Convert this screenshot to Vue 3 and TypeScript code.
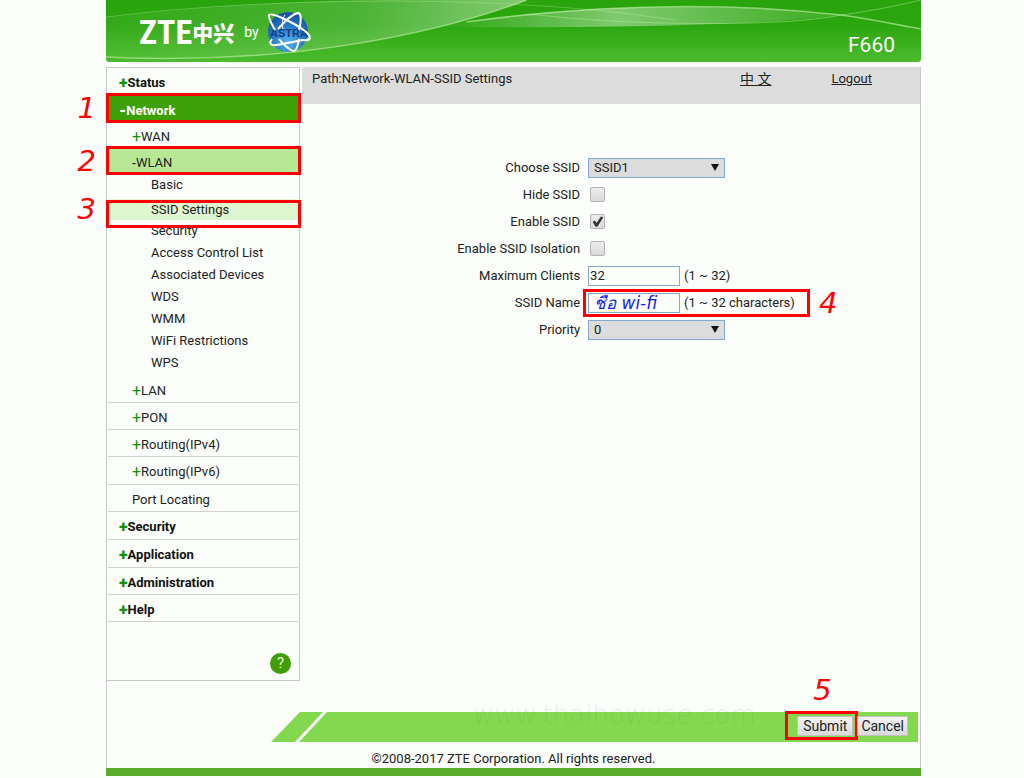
<script setup lang="ts">
import { ref } from 'vue'

interface Leaf {
  label: string
  current?: boolean
}
interface Entry {
  label: string
  sign: '+' | '-' | ''
  tall?: boolean
  step?: number
  leaves?: Leaf[]
}
interface Section extends Entry {
  entries?: Entry[]
}

const sections: Section[] = [
  { label: 'Status', sign: '+' },
  {
    label: 'Network',
    sign: '-',
    step: 1,
    entries: [
      { label: 'WAN', sign: '+' },
      {
        label: 'WLAN',
        sign: '-',
        step: 2,
        leaves: [
          { label: 'Basic' },
          { label: 'SSID Settings', current: true },
          { label: 'Security' },
          { label: 'Access Control List' },
          { label: 'Associated Devices' },
          { label: 'WDS' },
          { label: 'WMM' },
          { label: 'WiFi Restrictions' },
          { label: 'WPS' },
        ],
      },
      { label: 'LAN', sign: '+' },
      { label: 'PON', sign: '+' },
      { label: 'Routing(IPv4)', sign: '+' },
      { label: 'Routing(IPv6)', sign: '+', tall: true },
      { label: 'Port Locating', sign: '' },
    ],
  },
  { label: 'Security', sign: '+', tall: true },
  { label: 'Application', sign: '+', tall: true },
  { label: 'Administration', sign: '+' },
  { label: 'Help', sign: '+' },
]

const ssid = ref('SSID1')
const hide = ref(false)
const enable = ref(true)
const isolation = ref(false)
const clients = ref('32')
const ssidName = ref('ชื่อ wi-fi')
const priority = ref('0')
</script>

<template>
  <div class="page">
    <header class="banner">
      <svg class="waves" viewBox="0 0 814 62" preserveAspectRatio="none" aria-hidden="true">
        <defs>
          <linearGradient id="glow" x1="0" y1="0" x2="1" y2="0">
            <stop offset="0" stop-color="#fff" stop-opacity="0.04" />
            <stop offset="0.6" stop-color="#fff" stop-opacity="0.16" />
            <stop offset="1" stop-color="#fff" stop-opacity="0.42" />
          </linearGradient>
          <linearGradient id="lens" x1="0" y1="0" x2="1" y2="0">
            <stop offset="0" stop-color="#fff" stop-opacity="0" />
            <stop offset="0.45" stop-color="#fff" stop-opacity="0.4" />
            <stop offset="1" stop-color="#fff" stop-opacity="0.08" />
          </linearGradient>
        </defs>
        <path d="M0 17 C100 6 220 -4 420 0 C330 34 180 66 0 57 Z" fill="url(#glow)" />
        <path d="M0 57 C180 66 330 34 420 0" fill="none" stroke="#c3efae" stroke-opacity="0.6" stroke-width="1.5" />
        <path d="M0 17 C120 2 270 -2 380 3 S520 14 570 20" fill="none" stroke="#c3efae" stroke-opacity="0.3" />
        <path d="M330 27 C450 4 620 2 734 15 C650 26 500 28 330 27 Z" fill="url(#lens)" />
        <path d="M360 22 C500 3 620 2 734 15 C765 19 790 25 814 29" fill="none" stroke="#c9f3b4" stroke-opacity="0.6" stroke-width="1.5" />
        <path d="M420 14 C540 27 680 26 734 15 C765 11 790 6 814 0" fill="none" stroke="#c9f3b4" stroke-opacity="0.4" />
      </svg>
      <div class="brand">
        <span class="zte">ZTE</span><span class="zte-cn">中兴</span>
        <span class="by">by</span>
        <svg class="astra" viewBox="0 0 44 42" role="img" aria-label="ASTRA">
          <defs>
            <radialGradient id="globe" cx="0.5" cy="0.75" r="0.7">
              <stop offset="0" stop-color="#55b4ee" />
              <stop offset="0.6" stop-color="#2877c4" />
              <stop offset="1" stop-color="#1b55a3" />
            </radialGradient>
          </defs>
          <circle cx="21" cy="21" r="20" fill="url(#globe)" />
          <text x="22" y="26" text-anchor="middle" class="astra-name">ASTRA</text>
          <g fill="none" stroke="#fff" stroke-width="2" stroke-linejoin="round">
            <path d="M8 19 C4 12 1 6 2 4 C4 1 26 11 38 20 C46 27 43 30 36 29" />
            <path d="M36 29 C30 30 16 33 9 34 C3 35 2 32 5 28" />
            <path d="M11 18 C18 10 26 3 31 2 C35 2 34 12 32 19" />
            <path d="M32 28 C31 34 29 40 27 40 C23 40 15 32 12 28" />
            <path d="M16 18 C15 13 15 8 18 4" stroke-width="1" />
          </g>
        </svg>
      </div>
      <span class="model">F660</span>
    </header>

    <div class="frame">
      <div class="columns">
        <nav class="sidebar" aria-label="Main menu">
          <ul>
            <li v-for="s in sections" :key="s.label">
              <a href="#" class="row top" :class="{ active: s.step, tall: s.tall }">
                <b class="sign">{{ s.sign }}</b>{{ s.label }}
                <span v-if="s.step" class="mark"><i class="step">{{ s.step }}</i></span>
              </a>
              <ul v-if="s.entries">
                <li v-for="e in s.entries" :key="e.label">
                  <a href="#" class="row sub" :class="{ open: e.step, tall: e.tall, plain: e.label === 'WAN' }">
                    <span v-if="e.sign" class="sign">{{ e.sign }}</span>{{ e.label }}
                    <span v-if="e.step" class="mark"><i class="step">{{ e.step }}</i></span>
                  </a>
                  <ul v-if="e.leaves" class="leaves">
                    <li v-for="l in e.leaves" :key="l.label">
                      <a href="#" class="leaf" :class="{ current: l.current }">
                        {{ l.label }}
                        <span v-if="l.current" class="mark"><i class="step">3</i></span>
                      </a>
                    </li>
                  </ul>
                </li>
              </ul>
            </li>
          </ul>
          <button type="button" class="help" aria-label="Help">?</button>
        </nav>

        <main class="main">
          <div class="path">
            <span class="crumbs">Path:Network-WLAN-SSID Settings</span>
            <a href="#" class="lang">中 文</a>
            <a href="#">Logout</a>
          </div>
          <form id="ssid-form" class="form" @submit.prevent>
            <label for="ssid">Choose SSID</label>
            <div class="field">
              <span class="pick">
                <select id="ssid" v-model="ssid"><option>SSID1</option></select>
              </span>
            </div>
            <label for="hide">Hide SSID</label>
            <div class="field"><input id="hide" v-model="hide" type="checkbox" /></div>
            <label for="enable">Enable SSID</label>
            <div class="field"><input id="enable" v-model="enable" type="checkbox" /></div>
            <label for="isolation">Enable SSID Isolation</label>
            <div class="field"><input id="isolation" v-model="isolation" type="checkbox" /></div>
            <label for="clients">Maximum Clients</label>
            <div class="field">
              <input id="clients" v-model="clients" type="text" class="text" /><span>(1 ~ 32)</span>
            </div>
            <label for="name">SSID Name</label>
            <div class="field">
              <input id="name" v-model="ssidName" type="text" class="text note" /><span>(1 ~ 32 characters)</span>
              <span class="mark"><i class="step">4</i></span>
            </div>
            <label for="priority">Priority</label>
            <div class="field">
              <span class="pick">
                <select id="priority" v-model="priority"><option>0</option></select>
              </span>
            </div>
          </form>
        </main>
      </div>

      <div class="actions">
        <div class="slash"></div>
        <div class="bar">
          <span class="watermark">www.thaihowuse.com</span>
          <span class="submit-wrap">
            <button type="submit" form="ssid-form">Submit</button>
            <span class="mark"><i class="step">5</i></span>
          </span>
          <button type="button" class="cancel">Cancel</button>
        </div>
      </div>
      <footer class="copyright">©2008-2017 ZTE Corporation. All rights reserved.</footer>
    </div>
    <div class="strip"></div>
  </div>
</template>

<style>
body {
  margin: 0;
  background: #fcfefb;
}
</style>

<style scoped>
* {
  box-sizing: border-box;
}
.page {
  margin: 0 103px 0 106px;
  font: 13px/20px Roboto, "Noto Sans CJK SC", sans-serif;
  color: #222;
}
ul {
  list-style: none;
  margin: 0;
  padding: 0;
}
a {
  color: inherit;
}
.banner {
  position: relative;
  display: flex;
  align-items: center;
  justify-content: space-between;
  height: 62px;
  padding: 0 26px 0 33px;
  border-radius: 0 0 3px 3px;
  overflow: hidden;
  background: linear-gradient(#29a40c, #2ba60f 40%, #4cbc2e);
  color: #fff;
}
.waves {
  position: absolute;
  inset: 0;
  width: 100%;
  height: 100%;
}
.brand {
  position: relative;
  display: flex;
  align-items: center;
  padding-top: 2px;
}
.zte {
  font: bold 34px/40px "Liberation Sans Narrow", "Roboto Condensed", "DejaVu Sans Condensed", sans-serif;
}
.zte-cn {
  font: 900 21px/40px "Noto Sans CJK SC", sans-serif;
}
.by {
  margin: 0 8px 0 10px;
  font-size: 14px;
}
.astra {
  width: 44px;
  height: 42px;
}
.astra-name {
  font: bold 11px "Liberation Sans", sans-serif;
  fill: #123f86;
}
.model {
  position: relative;
  padding-top: 28px;
  font-size: 21px;
  line-height: 24px;
}
.frame {
  margin-top: 5px;
  border: solid #c8c8c8;
  border-width: 0 1px;
}
.columns {
  display: flex;
  align-items: flex-start;
  gap: 3px;
}
.sidebar {
  flex: none;
  width: 194px;
  margin-left: -1px;
  margin-right: -1px;
  border: 1px solid #c8c8c8;
}
.row {
  position: relative;
  display: flex;
  align-items: center;
  height: 27px;
  margin: 0 1px;
  padding-top: 3px;
  border-bottom: 1px solid #d0d2d0;
  text-decoration: none;
}
.tall {
  height: 28px;
}
.top {
  padding-left: 11px;
  font-weight: bold;
  color: #111;
}
.sub {
  padding-left: 24px;
}
.sign {
  font-size: 16px;
  color: #14930a;
}
li:first-child > .top,
.plain {
  border-color: transparent;
}
.active {
  padding-top: 5px;
  border: 0;
  background: #3f9f06;
  color: #fff;
}
.active .sign {
  color: #fff;
}
.open {
  height: 25px;
  border: 0;
  background: #b7e895;
}
.open .sign {
  font-size: 14px;
  color: #222;
}
.leaves {
  padding-bottom: 2px;
}
.leaf {
  position: relative;
  display: block;
  margin: 0 1px;
  padding-left: 43px;
  line-height: 22px;
  text-decoration: none;
}
.current {
  z-index: 1;
  margin-top: 3px;
  line-height: 21px;
  background: #e0f6d0;
}
.mark {
  position: absolute;
  inset: -2px -3px -1px -2px;
  border: 3px solid #f00;
}
.open .mark {
  inset: -3px -3px -1px -2px;
}
.current .mark {
  z-index: 1;
  inset: 1px -3px -8px -2px;
}
.current::after {
  content: "";
  position: absolute;
  inset: 100% 0 -5px 0;
  background: #fcfefb;
}
.step {
  position: absolute;
  right: 100%;
  top: 50%;
  margin-right: 13px;
  font: italic 29px/28px "DejaVu Sans", sans-serif;
  color: #f00;
  translate: 0 -50%;
}
.current .step {
  top: 25%;
}
.help {
  display: block;
  width: 21px;
  height: 21px;
  margin: 31px 8px 6px auto;
  padding: 0;
  border: 0;
  border-radius: 50%;
  background: #3f9f06;
  color: #e6f7dc;
  font: 15px/21px Roboto, sans-serif;
}
.main {
  flex: 1;
  min-width: 0;
}
.path {
  display: flex;
  gap: 60px;
  height: 37px;
  padding: 2px 48px 0 10px;
  background: #dcdcdc;
}
.crumbs {
  flex: 1;
}
.lang {
  font-size: 14px;
}
.form {
  display: grid;
  grid-template-columns: 45% 1fr;
  grid-auto-rows: 27px;
  align-items: center;
  column-gap: 8px;
  padding-top: 50px;
}
.form label {
  text-align: right;
}
.field {
  position: relative;
  display: flex;
  align-items: center;
  gap: 4px;
}
.pick {
  position: relative;
  width: 137px;
}
.pick::after {
  content: "";
  position: absolute;
  right: 6px;
  top: 6px;
  border: solid transparent;
  border-width: 7px 4px 0;
  border-top-color: #111;
}
select,
.text {
  display: block;
  height: 20px;
  border: 1px solid #84a9d0;
  border-radius: 0;
  color: #222;
  font: 13px/18px Roboto, sans-serif;
}
select {
  appearance: none;
  width: 100%;
  padding: 0 5px;
  background: #dcdcdc;
}
.text {
  width: 92px;
  padding: 0 1px;
  background: #fcfefb;
}
.note {
  padding-left: 5px;
  color: #1a1af0;
  font: italic 17px/18px "DejaVu Sans", sans-serif;
}
.field .mark {
  inset: 50% auto auto -5px;
  width: 227px;
  height: 28px;
  margin-top: -14px;
  pointer-events: none;
}
.field .step {
  right: auto;
  left: 100%;
  margin: 0 0 0 12px;
}
input[type="checkbox"] {
  appearance: none;
  width: 15px;
  height: 15px;
  margin: 0 2px;
  border: 1px solid #b4b4b4;
  border-radius: 2px;
  background: linear-gradient(#ededed, #dadada);
}
input[type="checkbox"]:checked::after {
  content: "";
  display: block;
  height: 13px;
  background: #333;
  clip-path: polygon(12% 52%, 30% 42%, 42% 62%, 76% 12%, 94% 18%, 50% 88%, 34% 90%);
}
.actions {
  display: flex;
  margin: 31px 2px 0 164px;
}
.slash {
  width: 54px;
  height: 30px;
  margin-right: -26px;
  background: #84d84f;
  clip-path: polygon(29px 0, 52px 0, 24px 100%, 0 100%);
}
.bar {
  position: relative;
  flex: 1;
  display: flex;
  align-items: center;
  justify-content: flex-end;
  gap: 4px;
  height: 30px;
  padding: 0 10px 2px 0;
}
.bar::before {
  content: "";
  position: absolute;
  inset: 0;
  background: #84d84f;
  clip-path: polygon(28px 0, 100% 0, 100% 100%, 0 100%);
}
.watermark {
  position: absolute;
  left: 174px;
  bottom: 12px;
  font: 26px/30px "DejaVu Sans Light", "DejaVu Sans", sans-serif;
  color: rgb(90 150 90 / 0.16);
}
.submit-wrap {
  position: relative;
  display: flex;
}
.bar button {
  position: relative;
  height: 20px;
  padding: 0 5px;
  border: 1px solid #c0c0c0;
  background: linear-gradient(#f4f4f4, #dadada);
  color: #222;
  font: 14px/16px Roboto, sans-serif;
}
.bar .cancel {
  padding: 0 3px;
}
.submit-wrap .mark {
  inset: -5px -5px -4px -12px;
  pointer-events: none;
}
.submit-wrap .step {
  right: 50%;
  top: -24px;
  margin: 0 -10px 0 0;
}
.copyright {
  padding: 7px 0 0;
  height: 26px;
  text-align: center;
}
.strip {
  height: 8px;
  background: #5aad2a;
}
</style>
